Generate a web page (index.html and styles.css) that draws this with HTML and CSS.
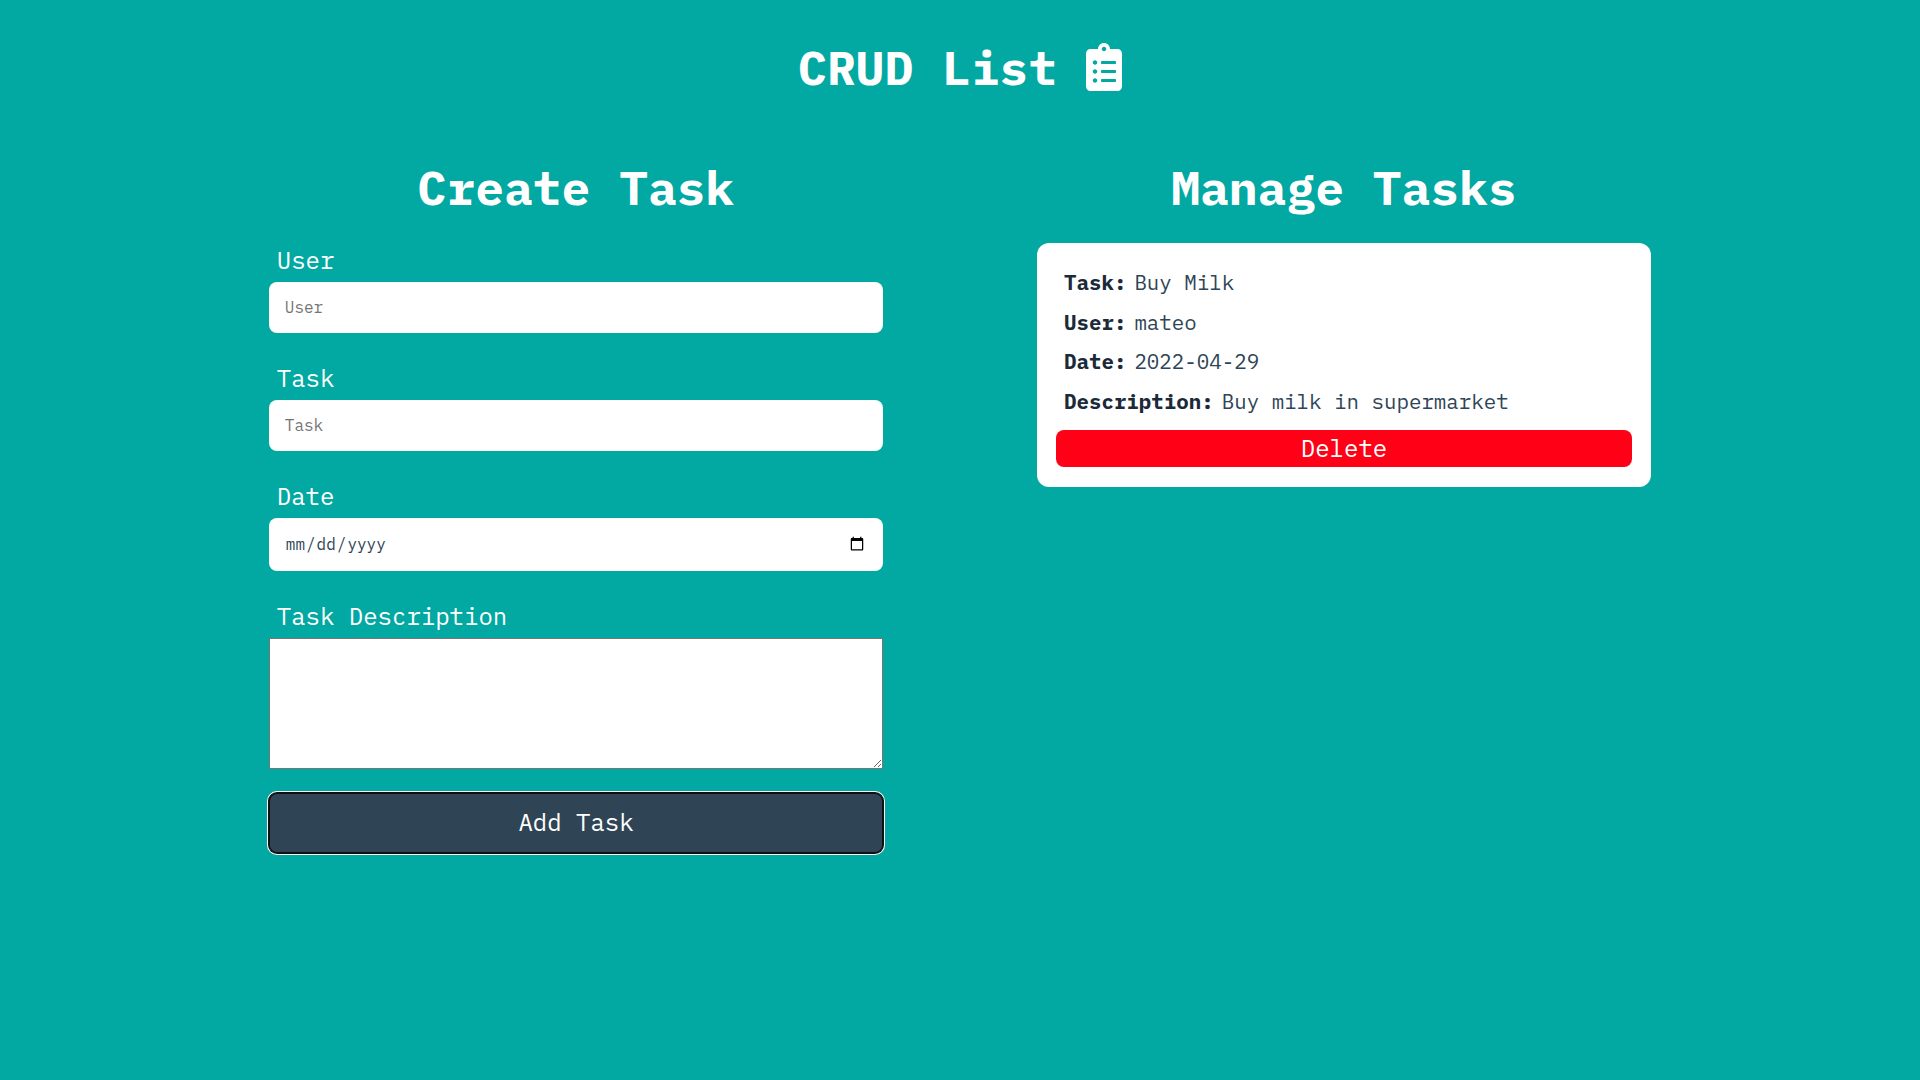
FILE: index.html
```html
<!DOCTYPE html>
<html lang="en">
<head>
<meta charset="utf-8">
<title>CRUD List</title>
<link rel="stylesheet" href="styles.css">
</head>
<body>
<header class="header">
  <h1 class="title">CRUD List</h1>
  <svg class="title-icon" viewBox="0 0 384 512" aria-hidden="true"><path fill="currentColor" d="M336 64h-80c0-35.300-28.700-64-64-64s-64 28.700-64 64H48C21.500 64 0 85.500 0 112v352c0 26.500 21.500 48 48 48h288c26.500 0 48-21.500 48-48V112c0-26.500-21.500-48-48-48zM96 424c-13.300 0-24-10.700-24-24s10.700-24 24-24 24 10.700 24 24-10.700 24-24 24zm0-96c-13.300 0-24-10.700-24-24s10.700-24 24-24 24 10.700 24 24-10.700 24-24 24zm0-96c-13.300 0-24-10.700-24-24s10.700-24 24-24 24 10.700 24 24-10.700 24-24 24zm96-192c13.300 0 24 10.700 24 24s-10.700 24-24 24-24-10.700-24-24 10.700-24 24-24zm128 368c0 4.400-3.600 8-8 8H168c-4.400 0-8-3.600-8-8v-16c0-4.400 3.600-8 8-8h144c4.400 0 8 3.600 8 8v16zm0-96c0 4.400-3.600 8-8 8H168c-4.400 0-8-3.600-8-8v-16c0-4.400 3.600-8 8-8h144c4.400 0 8 3.600 8 8v16zm0-96c0 4.400-3.600 8-8 8H168c-4.400 0-8-3.600-8-8v-16c0-4.400 3.600-8 8-8h144c4.400 0 8 3.600 8 8v16z"/></svg>
</header>
<main class="columns">
  <section class="column">
    <h2 class="title">Create Task</h2>
    <form class="form">
      <div class="field">
        <label class="label" for="user">User</label>
        <input class="input" id="user" type="text" placeholder="User">
      </div>
      <div class="field">
        <label class="label" for="task">Task</label>
        <input class="input" id="task" type="text" placeholder="Task">
      </div>
      <div class="field">
        <label class="label" for="date">Date</label>
        <input class="input input-date" id="date" type="date">
      </div>
      <div class="field">
        <label class="label" for="description">Task Description</label>
        <textarea class="textarea" id="description"></textarea>
      </div>
      <button class="button-add" type="button">Add Task</button>
    </form>
  </section>
  <section class="column">
    <h2 class="title">Manage Tasks</h2>
    <article class="card">
      <p class="row"><strong class="key">Task:</strong><span>Buy Milk</span></p>
      <p class="row"><strong class="key">User:</strong><span>mateo</span></p>
      <p class="row"><strong class="key">Date:</strong><span>2022-04-29</span></p>
      <p class="row"><strong class="key">Description:</strong><span>Buy milk in supermarket</span></p>
      <button class="button-delete" type="button">Delete</button>
    </article>
  </section>
</main>
</body>
</html>
```
FILE: styles.css
```css
* { box-sizing: border-box; }

body {
  margin: 0;
  min-height: 100vh;
  background: #02a8a2;
  color: #fff;
  font-family: "IBM Plex Mono", "Liberation Mono", monospace;
  font-weight: 400;
}

input, textarea, button { font: inherit; }

.header {
  display: flex;
  justify-content: center;
  gap: 28.8px;
  padding-top: 36px;
}

.title {
  margin: 0;
  font-size: 48px;
  line-height: 62px;
  font-weight: 700;
  text-align: center;
}

.title-icon { width: 36px; height: 48px; margin-top: 7px; }

.columns {
  display: grid;
  grid-template-columns: 1fr 1fr;
  width: 80%;
  margin: 58px auto 0;
}

.column { width: 80%; margin: 0 auto; }

.form {
  display: flex;
  flex-direction: column;
  gap: 30px;
  margin-top: 27px;
}

.field { display: flex; flex-direction: column; gap: 6px; }

.label {
  padding-left: 8px;
  font-size: 24px;
  line-height: 31px;
}

.input {
  width: 100%;
  height: 51px;
  padding: 0 16px 2px;
  border: 0;
  border-radius: 8px;
  background: #fff;
  color: #2f4555;
  font-size: 16px;
}

.input::placeholder { color: #757575; }

.input-date { height: 53px; }

.textarea {
  width: 100%;
  height: 131px;
  border: 1px solid #767676;
  border-radius: 0;
  background: #fff;
  resize: both;
}

.button-add {
  height: 60px;
  margin-top: -6px;
  padding: 0 0 2px;
  border: 0;
  border-radius: 8px;
  background: #2f4555;
  color: #fff;
  font-size: 24px;
  box-shadow: inset 0 0 0 1px #101010, 0 0 0 1px #101010, 0 0 0 2px #fff;
}

.card {
  display: flex;
  flex-direction: column;
  gap: 12.7px;
  height: 244px;
  margin-top: 25px;
  padding: 26px 19.2px 0;
  border-radius: 12px;
  background: #fff;
  color: #2f4555;
}

.row {
  display: flex;
  gap: 8px;
  margin: 0;
  padding-left: 8px;
  font-size: 20.8px;
  line-height: 27px;
}

.key { color: #1b2a38; font-weight: 700; }

.button-delete {
  height: 37px;
  margin-top: 2px;
  padding: 0;
  border: 0;
  border-radius: 8px;
  background: #ff0016;
  color: #fff;
  font-size: 24px;
}
```
